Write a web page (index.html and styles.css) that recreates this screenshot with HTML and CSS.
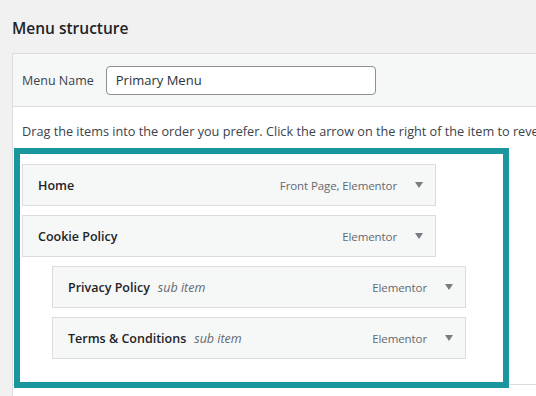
FILE: index.html
```html
<!DOCTYPE html>
<html>
<head>
<meta charset="utf-8">
<link rel="stylesheet" href="styles.css">
</head>
<body>
<div class="page">
  <h2 class="title">Menu structure</h2>
  <div class="panel">
    <div class="panel-header">
      <label class="name-label">Menu Name</label>
      <div class="name-input">Primary Menu</div>
    </div>
    <div class="panel-body">
      <p class="hint">Drag the items into the order you prefer. Click the arrow on the right of the item to reveal additional configuration options.</p>
      <div class="highlight">
        <div class="item">
          <span class="item-title">Home</span>
          <span class="item-type">Front Page, Elementor</span>
          <span class="arrow"></span>
        </div>
        <div class="item">
          <span class="item-title">Cookie Policy</span>
          <span class="item-type">Elementor</span>
          <span class="arrow"></span>
        </div>
        <div class="item sub">
          <span class="item-title">Privacy Policy</span>
          <span class="sub-label">sub item</span>
          <span class="item-type">Elementor</span>
          <span class="arrow"></span>
        </div>
        <div class="item sub">
          <span class="item-title">Terms &amp; Conditions</span>
          <span class="sub-label">sub item</span>
          <span class="item-type">Elementor</span>
          <span class="arrow"></span>
        </div>
      </div>
    </div>
    <div class="panel-footer"></div>
  </div>
</div>
</body>
</html>
```
FILE: styles.css
```css
html, body {
  margin: 0;
  padding: 0;
}
body {
  background: #f1f1f1;
  font-family: "Open Sans", "Noto Sans", sans-serif;
  color: #3c434a;
  width: 536px;
  height: 396px;
  overflow: hidden;
}
.page {
  padding-left: 12px;
}
.title {
  margin: 0;
  height: 53px;
  box-sizing: border-box;
  padding-top: 17px;
  font-size: 15.5px;
  font-weight: 600;
  color: #1d2327;
  line-height: 22px;
}
.panel {
  background: #fff;
  border-left: 1px solid #dcdcde;
  border-top: 1px solid #dcdcde;
}
.panel-header {
  background: #f6f7f7;
  border-bottom: 1px solid #dcdcde;
  display: flex;
  align-items: center;
  padding-left: 9px;
  box-sizing: border-box;
  height: 53px;
}
.name-label {
  font-size: 12.5px;
  color: #3c434a;
  margin-right: 12px;
}
.name-input {
  width: 270px;
  height: 29px;
  box-sizing: border-box;
  border: 1px solid #8c8f94;
  border-radius: 4px;
  background: #fff;
  font-size: 13px;
  color: #2c3338;
  padding-left: 9px;
  line-height: 27px;
}
.panel-body {
  padding-top: 15px;
  height: 279px;
  box-sizing: border-box;
}
.hint {
  margin: 0 0 0 9px;
  font-size: 12.7px;
  line-height: 18px;
  white-space: nowrap;
  color: #3c434a;
}
.highlight {
  position: relative;
  z-index: 1;
  margin-top: 8px;
  margin-left: 1px;
  width: 495px;
  height: 240px;
  box-sizing: border-box;
  border: 6px solid #1a969f;
  padding: 10px 0 0 2px;
  background: #fff;
}
.item {
  width: 414px;
  height: 42px;
  box-sizing: border-box;
  border: 1px solid #dcdcde;
  background: #f6f7f7;
  display: flex;
  align-items: center;
  padding: 0 12px 0 15px;
  margin-bottom: 9px;
}
.item.sub {
  margin-left: 30px;
}
.item-title {
  font-size: 12.5px;
  font-weight: 600;
  color: #1d2327;
}
.sub-label {
  font-size: 12.5px;
  font-style: italic;
  color: #646970;
  margin-left: 8px;
}
.item-type {
  margin-left: auto;
  font-size: 11.5px;
  letter-spacing: -0.1px;
  color: #646970;
}
.arrow {
  width: 0;
  height: 0;
  border-left: 4px solid transparent;
  border-right: 4px solid transparent;
  border-top: 6px solid #787c82;
  margin-left: 18px;
}
.panel-footer {
  border-top: 1px solid #dcdcde;
  margin-top: -2px;
  height: 20px;
}
```
